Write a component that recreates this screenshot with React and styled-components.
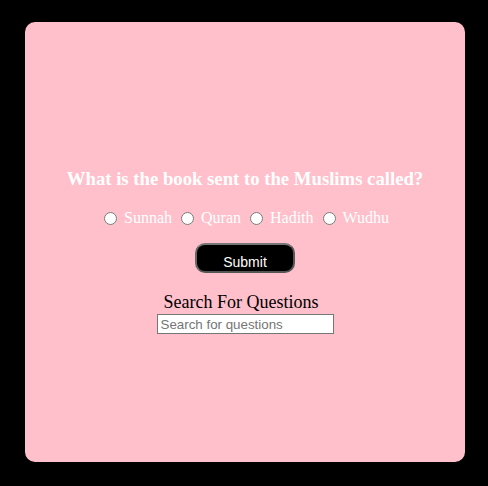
import React from 'react';
import styled, { createGlobalStyle } from 'styled-components';

const GlobalStyle = createGlobalStyle`
  html, body {
    margin: 0;
    padding: 0;
    background: #000;
    font-family: "Liberation Serif", "Times New Roman", serif;
  }
`;

const Page = styled.div`
  display: flex;
  align-items: center;
  justify-content: center;
  width: 488px;
  height: 486px;
  padding: 22px 23px 24px 25px;
  box-sizing: border-box;
`;

const Card = styled.div`
  width: 440px;
  height: 440px;
  background: pink;
  border-radius: 10px;
  display: flex;
  flex-direction: column;
  align-items: center;
  padding-top: 146px;
  box-sizing: border-box;
`;

const Question = styled.h3`
  margin: 0;
  color: #fff;
  font-size: 18.72px;
  font-weight: bold;
  line-height: 22px;
`;

const Options = styled.div`
  display: flex;
  align-items: center;
  margin: 19px 0 0 2px;
  color: #fff;
  font-size: 16px;
`;

const Option = styled.label`
  display: flex;
  align-items: center;
  margin-right: 4px;

  input {
    margin: 0 7px 0 5px;
    width: 13px;
    height: 13px;
  }
`;

const SubmitButton = styled.button`
  margin-top: 16px;
  width: 100px;
  height: 30px;
  background: #000;
  color: #fff;
  border: 2px solid #555;
  border-top-color: #777;
  border-left-color: #666;
  border-radius: 10px;
  font-family: "Liberation Sans", Arial, sans-serif;
  font-size: 14px;
  padding: 8px 0 0;
`;

const SearchLabel = styled.label`
  margin-top: 19px;
  padding-right: 8px;
  color: #000;
  font-size: 18px;
  line-height: 21px;
`;

const SearchInput = styled.input`
  margin-top: 1px;
  width: 177px;
  height: 20px;
  box-sizing: border-box;
  border: 1px solid #767676;
  padding: 1px 3px;
  font-family: "Liberation Sans", Arial, sans-serif;
  font-size: 13.33px;
  background: #fff;

  &::placeholder {
    color: #757575;
  }
`;

const options = ['Sunnah', 'Quran', 'Hadith', 'Wudhu'];

const App = () => {
  return (
    <>
      <GlobalStyle />
      <Page>
        <Card>
          <Question>What is the book sent to the Muslims called?</Question>
          <Options>
            {options.map(o => (
              <Option key={o}>
                <input type="radio" name="answer" value={o} />
                {o}
              </Option>
            ))}
          </Options>
          <SubmitButton>Submit</SubmitButton>
          <SearchLabel htmlFor="search">Search For Questions</SearchLabel>
          <SearchInput id="search" type="text" placeholder="Search for questions" />
        </Card>
      </Page>
    </>
  );
};

export default App;
